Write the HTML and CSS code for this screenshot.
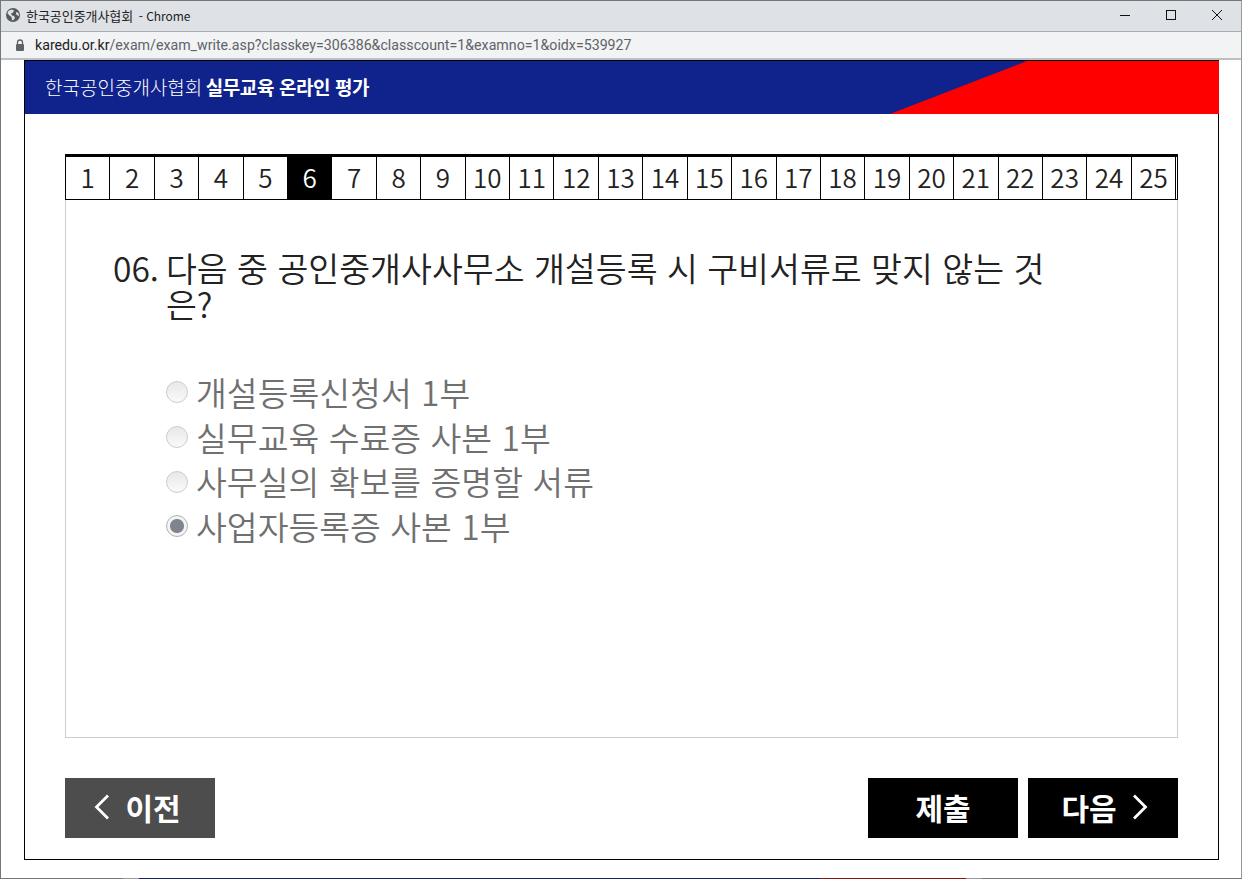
FILE: index.html
```html
<!DOCTYPE html>
<html lang="ko">
<head>
    <meta charset="UTF-8">
    <title>한국공인중개사협회 - Chrome</title>
    <link rel="stylesheet" href="styles.css">
</head>
<body>
    <div class="window">
        <div class="titlebar">
            <div class="title">
                <svg class="globe" width="14" height="14" viewBox="0 0 14 14">
                    <circle cx="7" cy="7" r="7" fill="#55585c"/>
                    <path d="M3 2.500l3-1 2 1-1 2-2 1 1 2 2 .5 1 2-2 2.500-1-.5-.5-3-2-1.500-2-2 .5-2zM10 4l2.500 1 .5 3-1.500-.5-1.500-1.500z" fill="#dee1e6"/>
                </svg>
                <span>한국공인중개사협회 <span class="title-app">- Chrome</span></span>
            </div>
            <div class="controls">
                <svg width="12" height="12" viewBox="0 0 12 12"><path d="M1 6.500h10" stroke="#111" fill="none"/></svg>
                <svg width="12" height="12" viewBox="0 0 12 12"><rect x="1.500" y="1.500" width="9" height="9" stroke="#111" fill="none"/></svg>
                <svg width="12" height="12" viewBox="0 0 12 12"><path d="M1 1l10 10M11 1L1 11" stroke="#111" fill="none"/></svg>
            </div>
        </div>
        <div class="addressbar">
            <svg width="10" height="12" viewBox="0 0 10 12"><path d="M2.500 5V3.500a2.500 2.500 0 0 1 5 0V5" stroke="#5f6368" stroke-width="1.300" fill="none"/><rect x="1" y="5" width="8" height="7" rx="1" fill="#5f6368"/></svg>
            <span class="url"><b>karedu.or.kr</b>/exam/exam_write.asp?classkey=306386&amp;classcount=1&amp;examno=1&amp;oidx=539927</span>
        </div>

        <div class="page">
            <div class="card">
                <div class="banner">
                    <h1>한국공인중개사협회 <strong>실무교육 온라인 평가</strong></h1>
                    <svg class="banner-red" width="329" height="53" viewBox="0 0 329 53"><polygon points="137,0 329,0 329,53 0,53" fill="#ff0000"/></svg>
                </div>

                <div class="exam">
                    <div class="numbers">
                        <a class="num">1</a><a class="num">2</a><a class="num">3</a><a class="num">4</a><a class="num">5</a>
                        <a class="num active">6</a><a class="num">7</a><a class="num">8</a><a class="num">9</a><a class="num">10</a>
                        <a class="num">11</a><a class="num">12</a><a class="num">13</a><a class="num">14</a><a class="num">15</a>
                        <a class="num">16</a><a class="num">17</a><a class="num">18</a><a class="num">19</a><a class="num">20</a>
                        <a class="num">21</a><a class="num">22</a><a class="num">23</a><a class="num">24</a><a class="num">25</a>
                    </div>

                    <div class="question-box">
                        <div class="question">
                            <span class="q-no">06.</span>
                            <span class="q-text">다음 중 공인중개사사무소 개설등록 시 구비서류로 맞지 않는 것은?</span>
                        </div>
                        <ul class="options">
                            <li><input type="radio" name="q6" disabled><label>개설등록신청서 1부</label></li>
                            <li><input type="radio" name="q6" disabled><label>실무교육 수료증 사본 1부</label></li>
                            <li><input type="radio" name="q6" disabled><label>사무실의 확보를 증명할 서류</label></li>
                            <li><input type="radio" name="q6" disabled checked><label>사업자등록증 사본 1부</label></li>
                        </ul>
                    </div>

                    <div class="buttons">
                        <button class="btn btn-prev">
                            <svg width="15" height="26" viewBox="0 0 15 26"><path d="M14 1.500L2.500 13 14 24.500" stroke="#fff" stroke-width="2.800" fill="none"/></svg>
                            이전
                        </button>
                        <div class="buttons-right">
                            <button class="btn">제출</button>
                            <button class="btn btn-next">
                                다음
                                <svg width="15" height="26" viewBox="0 0 15 26"><path d="M1 1.500L12.500 13 1 24.500" stroke="#fff" stroke-width="2.800" fill="none"/></svg>
                            </button>
                        </div>
                    </div>
                </div>
            </div>
        </div>
    </div>
    <div class="desktop-edge"></div>
</body>
</html>
```

FILE: styles.css
```css
* {
    box-sizing: border-box;
}
html, body {
    margin: 0;
    height: 100%;
    overflow: hidden;
}
body {
    font-family: "Noto Sans CJK KR", "Noto Sans", sans-serif;
    background-color: white;
}
.window {
    height: 878px;
    border: 1px solid #777;
    border-bottom: none;
    border-right-color: #999;
    display: flex;
    flex-direction: column;
}
.desktop-edge {
    height: 1px;
    background: linear-gradient(to right, #777 123px, #999 123px, #999 139px, #16205a 139px, #16205a 820px, #8b1010 820px, #8b1010 966px, #999 966px, #999 982px, #777 982px);
}
.titlebar {
    height: 31px;
    flex: none;
    background-color: #dee1e6;
    border-bottom: 1px solid #a9abae;
    display: flex;
    align-items: center;
    justify-content: space-between;
    padding: 0 18px 2px 5px;
}
.title {
    display: flex;
    align-items: center;
    gap: 6px;
    font-size: 13px;
    letter-spacing: -0.05px;
    color: #222;
}
.title-app {
    font-size: 12px;
    margin-left: 2px;
}
.controls {
    display: flex;
    gap: 34px;
}
.addressbar {
    height: 28px;
    flex: none;
    background-color: #f1f3f4;
    border-bottom: 2px solid #bdbfc1;
    display: flex;
    align-items: center;
    gap: 10px;
    padding-left: 14px;
}
.url {
    font-family: "Roboto", "Liberation Sans", sans-serif;
    font-size: 14.200px;
    color: #5f6368;
}
.url b {
    font-weight: normal;
    color: #222;
}
.page {
    flex: 1;
    padding: 0 22px 18px 23px;
}
.card {
    height: 800px;
    border: 1px solid black;
    background-color: white;
}
.banner {
    height: 53px;
    margin-right: -1px;
    background-color: #10228b;
    position: relative;
    display: flex;
    align-items: center;
    padding: 0 0 2px 20px;
}
.banner h1 {
    margin: 0;
    font-size: 19px;
    font-weight: 300;
    color: white;
}
.banner strong {
    font-weight: 700;
    letter-spacing: -0.4px;
    margin-left: -2px;
}
.banner-red {
    position: absolute;
    right: 0;
    top: 0;
}
.exam {
    padding: 40px 40px 0;
}
.numbers {
    display: flex;
    height: 46px;
    border-top: 3px solid black;
    border-bottom: 1px solid black;
    border-left: 1px solid black;
    border-right: 1px solid black;
}
.num {
    width: 44.420px;
    flex: none;
    border-right: 1px solid black;
    display: flex;
    align-items: center;
    justify-content: center;
    padding-bottom: 4px;
    font-size: 26px;
    font-weight: 350;
    color: #222;
}
.num.active {
    background-color: black;
    color: white;
}
.question-box {
    height: 538px;
    border: 1px solid #ccc;
    border-top: none;
    padding: 50px 47px 0;
}
.question {
    display: flex;
    gap: 7px;
    font-size: 33.600px;
    font-weight: 350;
    line-height: 36px;
    color: #222;
}
.q-text {
    width: 900px;
    word-break: break-all;
}
.options {
    list-style: none;
    margin: 48px 0 0;
    padding: 0 0 0 53px;
    font-size: 33.500px;
    font-weight: 350;
    line-height: 44.700px;
    color: #707070;
}
.options li {
    display: flex;
    align-items: center;
    gap: 8px;
}
.options input {
    appearance: none;
    width: 22px;
    height: 22px;
    margin: 0;
    border: 1px solid #ccc;
    border-radius: 50%;
    background: linear-gradient(#e8e8e8, #fafafa);
}
.options input:checked {
    border-color: #aeb2b6;
    background: radial-gradient(circle, #80848c 0, #80848c 6.500px, #f4f4f4 7.500px);
}
.buttons {
    display: flex;
    justify-content: space-between;
    margin-top: 40px;
}
.buttons-right {
    display: flex;
    gap: 10px;
}
.btn {
    width: 150px;
    height: 60px;
    padding: 0 0 2px;
    border: none;
    background-color: black;
    color: white;
    font-family: inherit;
    font-size: 30px;
    font-weight: 700;
    display: flex;
    align-items: center;
    justify-content: center;
    gap: 16px;
}
.btn-prev {
    background-color: #4d4d4d;
    padding-right: 5px;
}
.btn-next {
    padding-left: 3px;
}
```
